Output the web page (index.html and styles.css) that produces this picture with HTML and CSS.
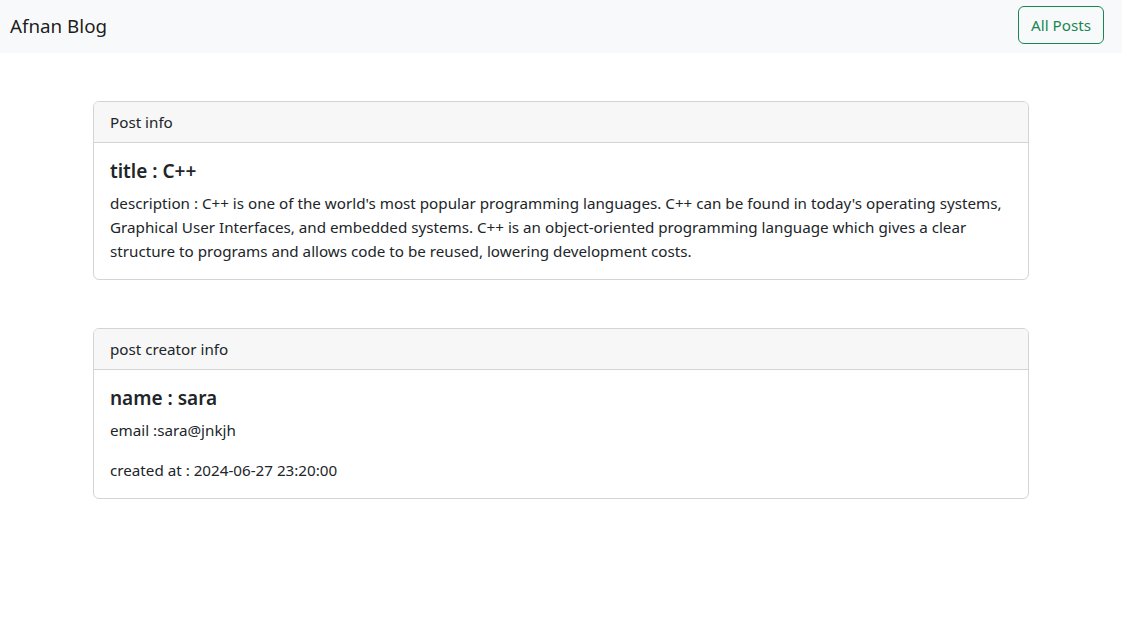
FILE: index.html
```html
<!DOCTYPE html>
<html lang="en">
<head>
<meta charset="utf-8">
<title>Afnan Blog</title>
<link rel="stylesheet" href="styles.css">
</head>
<body>
<nav class="navbar">
  <a class="brand" href="#">Afnan Blog</a>
  <a class="btn-outline" href="#">All Posts</a>
</nav>
<main class="container">
  <section class="card">
    <div class="card-header">Post info</div>
    <div class="card-body">
      <h5 class="card-title">title : C++</h5>
      <p class="card-text">description : C++ is one of the world's most popular programming languages. C++ can be found in today's operating systems, Graphical User Interfaces, and embedded systems. C++ is an object-oriented programming language which gives a clear structure to programs and allows code to be reused, lowering development costs.</p>
    </div>
  </section>
  <section class="card">
    <div class="card-header">post creator info</div>
    <div class="card-body">
      <h5 class="card-title">name : sara</h5>
      <p class="card-text">email :sara@jnkjh</p>
      <p class="card-text">created at : 2024-06-27 23:20:00</p>
    </div>
  </section>
</main>
</body>
</html>
```
FILE: styles.css
```css
* { box-sizing: border-box; }
html, body { margin: 0; padding: 0; }
body {
  font-family: "Noto Sans", "Open Sans", sans-serif;
  font-size: 15.2px;
  line-height: 24px;
  color: #212529;
  background: #fff;
}
.navbar {
  height: 53px;
  background: #f8f9fa;
  display: flex;
  align-items: flex-start;
  justify-content: space-between;
  padding: 0 18px 0 10px;
}
.brand {
  font-size: 18.8px;
  line-height: 30px;
  margin-top: 11px;
  color: rgba(0,0,0,0.9);
  text-decoration: none;
}
.btn-outline {
  margin-top: 6px;
  height: 38px;
  padding: 6px 12px;
  border: 1px solid #198754;
  border-radius: 6px;
  color: #198754;
  text-decoration: none;
  font-size: 15.2px;
  line-height: 24px;
}
.container {
  width: 936px;
  margin: 0 auto;
}
.card {
  margin-top: 48px;
  border: 1px solid #d3d4d5;
  border-radius: 6px;
  overflow: hidden;
}
.card-header {
  background: #f7f7f7;
  padding: 8px 16px;
  border-bottom: 1px solid #d3d4d5;
}
.card-body {
  padding: 16px;
}
.card-title {
  margin: 0 0 8px;
  font-size: 19px;
  line-height: 24px;
  font-weight: 600;
}
.card-text {
  margin: 0 0 16px;
}
.card-text:last-child { margin-bottom: 0; }
```
